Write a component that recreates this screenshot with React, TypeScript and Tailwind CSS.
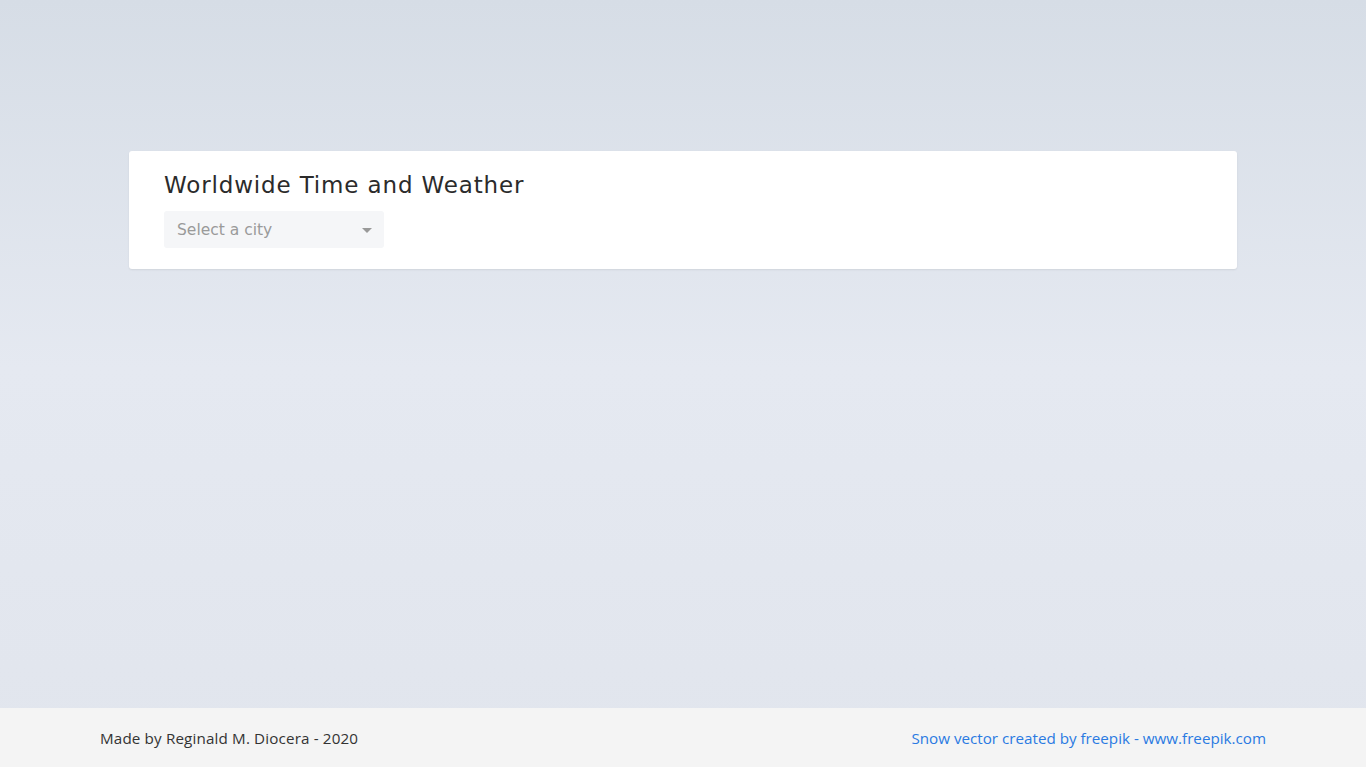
export default function App() {
  return (
    <div className="flex min-h-screen flex-col bg-[linear-gradient(180deg,#d6dde6_0%,#e5e9f1_48%,#e1e5ed_100%)] font-['Open_Sans',sans-serif]">
      <main className="flex-1 px-[129px] pt-[151px]">
        <div className="h-[118px] rounded-[3px] bg-white px-[35px] pt-[19px] shadow-[0_1px_2px_rgba(0,0,0,0.08)]">
          <h1 className="font-['DejaVu_Sans',sans-serif] text-[23px] leading-[30px] font-normal tracking-[0.85px] text-[#2b2b2b]">
            Worldwide Time and Weather
          </h1>
          <button
            type="button"
            className="mt-[11px] flex h-[37px] w-[220px] items-center justify-between rounded-[3px] bg-[#f5f6f8] pr-[12px] pl-[13px] text-left"
          >
            <span className="mt-[2px] font-['DejaVu_Sans',sans-serif] text-[15.5px] text-[#9a9a9a]">Select a city</span>
            <svg width="10" height="5" viewBox="0 0 10 5" className="mt-[1px]">
              <path d="M0 0h10L5 5z" fill="#999" />
            </svg>
          </button>
        </div>
      </main>
      <footer className="flex h-[59px] items-center justify-between bg-[#f4f4f4] px-[100px] pt-[2px] text-[15.2px]">
        <p className="tracking-[0.15px] text-[#333]">Made by Reginald M. Diocera - 2020</p>
        <a href="#" className="text-[#2a7ae2]">
          Snow vector created by freepik - www.freepik.com
        </a>
      </footer>
    </div>
  );
}
